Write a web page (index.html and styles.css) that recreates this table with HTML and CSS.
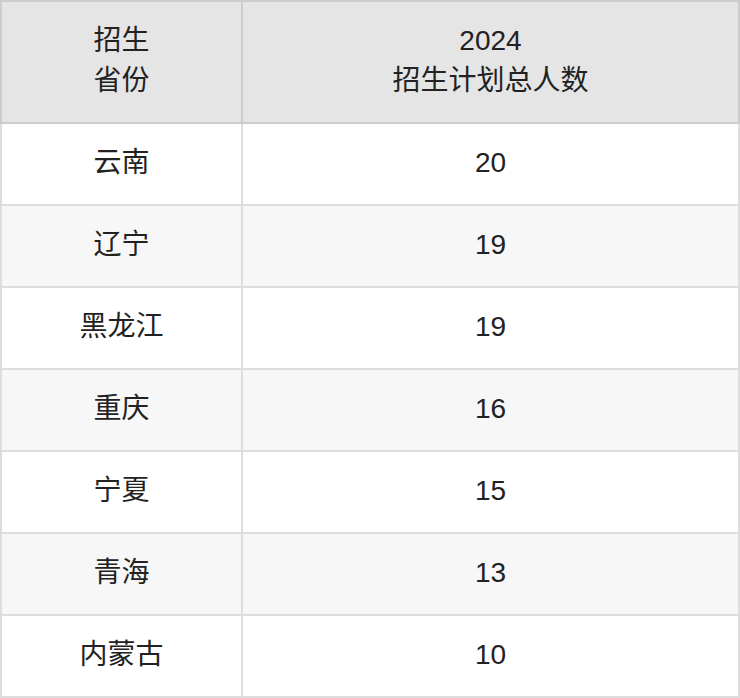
FILE: index.html
```html
<!DOCTYPE html>
<html>
<head>
<meta charset="utf-8">
<link rel="stylesheet" href="styles.css">
</head>
<body>
<table class="plan">
  <colgroup><col class="c1"><col class="c2"></colgroup>
  <thead>
    <tr><th>招生<br>省份</th><th>2024<br>招生计划总人数</th></tr>
  </thead>
  <tbody>
    <tr><td>云南</td><td>20</td></tr>
    <tr><td>辽宁</td><td>19</td></tr>
    <tr><td>黑龙江</td><td>19</td></tr>
    <tr><td>重庆</td><td>16</td></tr>
    <tr><td>宁夏</td><td>15</td></tr>
    <tr><td>青海</td><td>13</td></tr>
    <tr><td>内蒙古</td><td>10</td></tr>
  </tbody>
</table>
</body>
</html>
```
FILE: styles.css
```css
html, body { margin: 0; padding: 0; background: #fff; }
.plan {
  width: 740px;
  border-collapse: collapse;
  table-layout: fixed;
  font-family: "Liberation Sans", "Noto Sans CJK SC", sans-serif;
  font-size: 28px;
  color: #222;
}
.c1 { width: 241px; }
.plan th, .plan td {
  border: 2px solid #ddd;
  text-align: center;
  vertical-align: middle;
  padding: 0 0 2px 0;
  font-weight: normal;
}
.plan th {
  background: #e5e5e5;
  border-color: #ccc;
  height: 118px;
  line-height: 40px;
}
.plan td { height: 78px; line-height: 32px; }
.plan tbody tr:nth-child(even) td { background: #f7f7f7; }
```
